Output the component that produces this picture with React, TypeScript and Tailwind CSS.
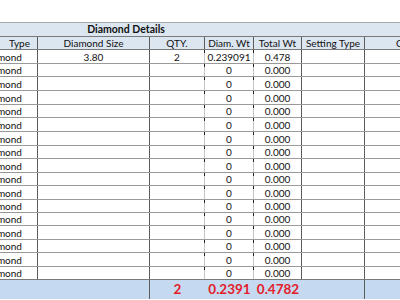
import React from "react";

const rowHeights = [
  "h-[14px]", "h-[13px]", "h-[14px]", "h-[14px]", "h-[13px]", "h-[14px]",
  "h-[14px]", "h-[13px]", "h-[14px]", "h-[13px]", "h-[14px]", "h-[13px]",
  "h-[13px]", "h-[14px]", "h-[13px]", "h-[14px]", "h-[13px]",
];

const rows = rowHeights.map((h, i) => ({
  h,
  size: i === 0 ? "3.80" : "",
  qty: i === 0 ? "2" : "",
  diam: i === 0 ? "0.239091" : "0",
  total: i === 0 ? "0.478" : "0.000",
}));

const Tick: React.FC = () => (
  <span className="absolute left-[-1px] top-0 w-[1px] h-[3px] bg-[#222]" />
);

const App: React.FC = () => {
  return (
    <div
      className="w-[400px] h-[300px] overflow-hidden bg-white text-[10px] leading-none text-[#111]"
      style={{ fontFamily: "Lato, 'Liberation Sans', sans-serif" }}
    >
      <div className="h-[22px]" />
      <div className="-ml-[21px] w-[520px]">
        {/* title band */}
        <div className="flex h-[15px] bg-[#dce6f1] border-t border-b border-t-[#a8a8a8] border-b-[#7a7a7a]">
          <div className="w-[21px]" />
          <div className="w-[252px] flex items-center justify-center font-bold text-[10.5px]">
            Diamond Details
          </div>
        </div>

        {/* column headers */}
        <div className="flex h-[13px] bg-[#dce6f1] border-b border-[#7a7a7a]">
          <div className="w-[59px] shrink-0 border-r border-[#5c5c5c] flex items-center justify-end gap-[14px] pr-[7px]">
            <span>Stone</span>
            <span>Type</span>
          </div>
          <div className="w-[112px] shrink-0 border-r border-[#5c5c5c] flex items-center justify-center">Diamond Size</div>
          <div className="w-[55px] shrink-0 border-r border-[#5c5c5c] flex items-center justify-center">QTY.</div>
          <div className="w-[49px] shrink-0 border-r border-[#5c5c5c] flex items-center justify-center">Diam. Wt</div>
          <div className="w-[48px] shrink-0 border-r border-[#5c5c5c] flex items-center justify-center">Total Wt</div>
          <div className="w-[63px] shrink-0 border-r border-[#5c5c5c] flex items-center justify-center">Setting Type</div>
          <div className="w-[92px] shrink-0 border-r border-[#5c5c5c] flex items-center justify-center">Clarity</div>
        </div>

        {/* data rows */}
        {rows.map((r, i) => (
          <div key={i} className={`flex ${r.h} border-b border-[#9a9a9a]`}>
            <div className="w-[59px] shrink-0 border-r border-[#5c5c5c] flex items-center pl-[3px]">Diamond</div>
            <div className="w-[112px] shrink-0 border-r border-[#5c5c5c] flex items-center justify-center">{r.size}</div>
            <div className="w-[55px] shrink-0 border-r border-[#c4c4c4] flex items-center justify-center">{r.qty}</div>
            <div className="relative w-[49px] shrink-0 border-r border-[#c4c4c4] flex items-center justify-center">
              <Tick />
              {r.diam}
            </div>
            <div className="relative w-[48px] shrink-0 border-r border-[#5c5c5c] flex items-center justify-center">
              <Tick />
              {r.total}
            </div>
            <div className="w-[63px] shrink-0 border-r border-[#5c5c5c]" />
            <div className="w-[92px] shrink-0 border-r border-[#5c5c5c]" />
          </div>
        ))}

        {/* totals */}
        <div className="flex h-[20px] bg-[#c5d9f1] border-t border-[#7a7a7a] -mt-px font-bold text-[13.5px] text-[#e3202a]">
          <div className="w-[171px] shrink-0 border-r border-[#5c5c5c]" />
          <div className="w-[55px] shrink-0 flex items-center justify-center">2</div>
          <div className="w-[49px] shrink-0 flex items-center justify-center">0.2391</div>
          <div className="w-[48px] shrink-0 flex items-center justify-center">0.4782</div>
          <div className="w-[63px] shrink-0 border-r border-[#5c5c5c]" />
          <div className="w-[92px] shrink-0" />
        </div>
      </div>
    </div>
  );
};

export default App;
